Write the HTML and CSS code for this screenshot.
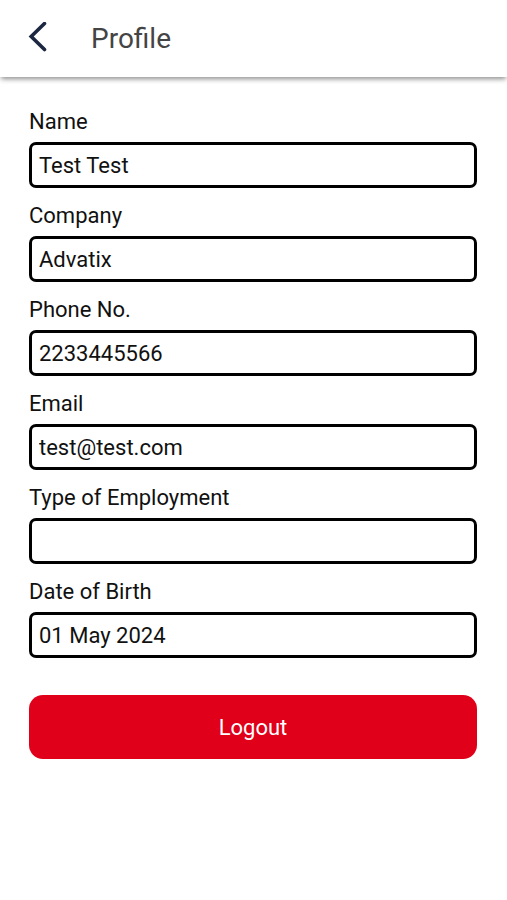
FILE: index.html
```
<!DOCTYPE html>
<html lang="en">
<head>
  <meta charset="UTF-8">
  <meta name="viewport" content="width=device-width, initial-scale=1.0">
  <title>Profile</title>
  <link rel="stylesheet" href="styles.css">
</head>
<body>

    <header class="header-container">
        <button type="button" class="back-btn" aria-label="Back">
            <svg width="20" height="34" viewBox="0 0 20 34" fill="none" stroke="#1c2842" stroke-width="3.6" stroke-linecap="round">
                <path d="M16.5 1.5 L3.2 14.5 L16.5 27.5"/>
            </svg>
        </button>
        <h1>Profile</h1>
    </header>

    <form class="profile-form">
        <label for="name">Name</label>
        <input type="text" id="name" value="Test Test">

        <label for="company">Company</label>
        <input type="text" id="company" value="Advatix">

        <label for="phone">Phone No.</label>
        <input type="text" id="phone" value="2233445566">

        <label for="email">Email</label>
        <input type="text" id="email" value="test@test.com">

        <label for="employment">Type of Employment</label>
        <input type="text" id="employment" value="">

        <label for="dob">Date of Birth</label>
        <input type="text" id="dob" value="01 May 2024">

        <button type="submit" class="logout-btn">Logout</button>
    </form>

</body>
</html>
```
FILE: styles.css
```
/* Reset default margin and padding */
body, h1, label, input, button {
    margin: 0;
    padding: 0;
    font-family: Roboto, Arial, sans-serif;
}

body {
    background-color: #ffffff;
    color: #111111;
}

/* Top bar */
.header-container {
    display: flex;
    align-items: center;
    gap: 43px;
    height: 77px;
    padding: 0 28px;
    background-color: #ffffff;
    box-shadow: 0 3px 5px -1px rgba(0, 0, 0, 0.45);
}

.header-container h1 {
    font-size: 28px;
    font-weight: 400;
    color: #444444;
}

.back-btn {
    display: flex;
    border: none;
    background: none;
    cursor: pointer;
}

/* Profile fields */
.profile-form {
    padding: 31px 30px 30px 29px;
}

.profile-form label {
    display: block;
    height: 34px;
    font-size: 22px;
    line-height: 28px;
}

.profile-form input {
    display: block;
    box-sizing: border-box;
    width: 100%;
    height: 46px;
    margin-bottom: 14px;
    padding: 0 7px;
    border: 3px solid #000000;
    border-radius: 7px;
    background-color: #ffffff;
    color: #111111;
    font-size: 22px;
}

.profile-form input:last-of-type {
    margin-bottom: 0;
}

.logout-btn {
    display: block;
    width: 100%;
    height: 64px;
    margin-top: 37px;
    border: none;
    border-radius: 14px;
    background-color: #e1001a;
    color: #ffffff;
    font-size: 22px;
    cursor: pointer;
}
```
